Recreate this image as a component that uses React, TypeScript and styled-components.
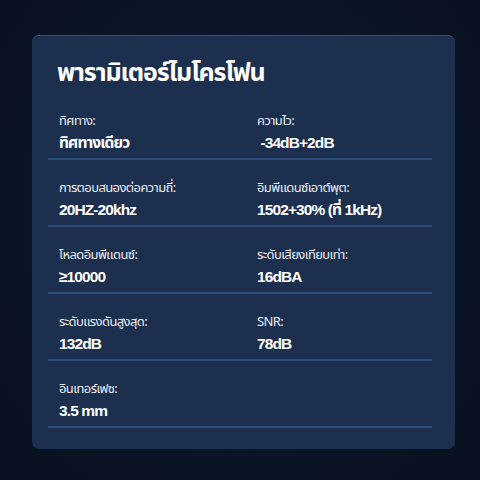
import React from "react";
import styled, { createGlobalStyle } from "styled-components";

type Spec = { label: string; value: string };

const rows: Spec[][] = [
  [
    { label: "ทิศทาง:", value: "ทิศทางเดียว" },
    { label: "ความไว:", value: " -34dB+2dB" },
  ],
  [
    { label: "การตอบสนองต่อความถี่:", value: "20HZ-20khz" },
    { label: "อิมพีแดนซ์เอาต์พุต:", value: "1502+30% (ที่ 1kHz)" },
  ],
  [
    { label: "โหลดอิมพีแดนซ์:", value: "≥10000" },
    { label: "ระดับเสียงเทียบเท่า:", value: "16dBA" },
  ],
  [
    { label: "ระดับแรงดันสูงสุด:", value: "132dB" },
    { label: "SNR:", value: "78dB" },
  ],
  [{ label: "อินเทอร์เฟซ:", value: "3.5 mm" }],
];

const App: React.FC = () => {
  return (
    <Page>
      <GlobalStyle />
      <Card>
        <Title>พารามิเตอร์ไมโครโฟน</Title>
        <List>
          {rows.map((row, i) => (
            <Row key={i}>
              {row.map((item) => (
                <Cell key={item.label}>
                  <Label>{item.label}</Label>
                  <Value>{item.value}</Value>
                </Cell>
              ))}
            </Row>
          ))}
        </List>
      </Card>
    </Page>
  );
};

const GlobalStyle = createGlobalStyle`
  html, body {
    margin: 0;
    padding: 0;
    background: #0a1526;
  }
`;

const Page = styled.div`
  width: 480px;
  height: 480px;
  box-sizing: border-box;
  padding: 35px 25px 31px 32px;
  background: radial-gradient(ellipse at 50% 45%, #0d1a2e 0%, #0a1526 60%, #08111f 100%);
  font-family: "Noto Sans Thai", "Noto Sans", "Liberation Sans", sans-serif;
  color: #ffffff;
`;

const Card = styled.div`
  height: 100%;
  box-sizing: border-box;
  background: #1c2f4e;
  border-radius: 7px;
  border-top: 1px solid #3a4f70;
  padding: 20px 23px 0 16px;
`;

const Title = styled.h1`
  margin: 0 0 0 9px;
  height: 37px;
  font-size: 25px;
  line-height: 35px;
  font-weight: 700;
  letter-spacing: -1.1px;
`;

const List = styled.div`
  display: flex;
  flex-direction: column;
`;

const Row = styled.div`
  display: grid;
  grid-template-columns: 198px 1fr;
  padding: 19px 0 5px 11px;
  border-bottom: 2px solid #2c4d7a;
`;

const Cell = styled.div`
  display: flex;
  flex-direction: column;
  gap: 3px;
`;

const Label = styled.div`
  font-size: 13px;
  line-height: 18px;
  color: #e8edf5;
  letter-spacing: -0.6px;
`;

const Value = styled.div`
  font-family: "Liberation Sans", "Noto Sans Thai", sans-serif;
  font-size: 15.5px;
  line-height: 20px;
  font-weight: 700;
  white-space: pre;
  letter-spacing: -0.9px;
`;

export default App;
